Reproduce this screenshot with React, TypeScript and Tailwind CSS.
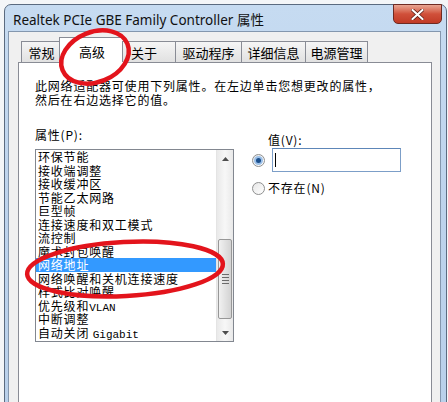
import React from 'react';

const cjk = "font-['Noto_Sans_CJK_SC','Noto_Sans',sans-serif]";

const items = [
  '环保节能',
  '接收端调整',
  '接收缓冲区',
  '节能乙太网路',
  '巨型帧',
  '连接速度和双工模式',
  '流控制',
  '魔术封包唤醒',
  '网络地址',
  '网络唤醒和关机连接速度',
  '样式比对唤醒',
  '优先级和VLAN',
  '中断调整',
  '自动关闭 Gigabit',
];

// latin runs in the list use the half-width mono look of the original font
const ItemText = ({ text }: { text: string }) => (
  <>
    {text.split(/([A-Za-z]+)/).map((part, i) =>
      /^[A-Za-z]+$/.test(part) ? (
        <span key={i} className="font-['Liberation_Mono',monospace] text-[11px] tracking-[0px]">
          {part}
        </span>
      ) : (
        <span key={i}>{part}</span>
      )
    )}
  </>
);

const Tab = ({ label, className = '' }: { label: string; className?: string }) => (
  <div
    className={`h-[21px] flex items-center border border-b-0 border-[#898c95] bg-gradient-to-b from-[#f5f5f5] to-[#e1e1e1] text-[13px] leading-[14px] text-black ${className}`}
  >
    {label}
  </div>
);

const Radio = ({ checked }: { checked?: boolean }) => (
  <div className="w-[13px] h-[13px] rounded-full border border-[#8e8f8f] bg-gradient-to-br from-[#e6e6e6] to-[#ffffff] flex items-center justify-center shrink-0">
    {checked && <div className="w-[5px] h-[5px] rounded-full bg-[#1b4f8c] ring-2 ring-[#9cc0e8]" />}
  </div>
);

const ScrollArrow = ({ up }: { up?: boolean }) => (
  <div className="h-[17px] flex items-center justify-center">
    <svg width="7" height="4" viewBox="0 0 7 4">
      <path d={up ? 'M0 4 L3.5 0 L7 4 Z' : 'M0 0 L3.5 4 L7 0 Z'} fill="#4d4d4d" />
    </svg>
  </div>
);

export default function App() {
  return (
    <div className="w-[448px] h-[402px] overflow-hidden relative bg-[#f4f6f8]">
      {/* window frame */}
      <div className="ml-[4px] mt-[4px] w-[443px] h-[420px] rounded-t-[7px] border border-[#5b6b80] bg-gradient-to-b from-[#c6dbf1] via-[#bdd3ec] to-[#b9d0ea] flex flex-col">
        {/* title bar */}
        <div className="h-[31px] flex items-start justify-between pl-[8px] pr-[4px]">
          <div className="pt-[7px] text-[13.5px] leading-[16px] text-[#111] font-['Segoe_UI','Noto_Sans','Noto_Sans_CJK_SC',sans-serif]">
            Realtek PCIe GBE Family Controller 属性
          </div>
          <div className="-mt-px w-[49px] h-[20px] rounded-b-[5px] border border-[#6e2a22] bg-gradient-to-b from-[#e8a592] via-[#d0503a] to-[#c13a26] flex items-center justify-center">
            <svg width="13" height="11" viewBox="0 0 13 11">
              <path d="M1.5 1 L11.5 10 M11.5 1 L1.5 10" stroke="#5a1a12" strokeWidth="3.6" strokeLinecap="round" />
              <path d="M1.5 1 L11.5 10 M11.5 1 L1.5 10" stroke="#ffffff" strokeWidth="2.2" strokeLinecap="round" />
            </svg>
          </div>
        </div>

        {/* client area */}
        <div className="ml-[3px] w-[433px] flex-1 border border-[#8497ae] bg-[#f0f0f0]">
          <div className="ml-[9px] mt-[4px] w-[414px]">
            {/* tabs */}
            <div className={`flex items-end h-[26px] pl-[3px] relative z-10 ${cjk}`}>
              <Tab label="常规" className="w-[41px] justify-center pt-[2px]" />
              <div className="-ml-[3px] -mb-px w-[66px] h-[26px] border border-b-0 border-[#898c95] bg-white flex items-center justify-center text-[13px] leading-[14px] text-black pt-[2px]">
                高级
              </div>
              <Tab label="关于" className="-ml-[3px] w-[54px] pl-[8px] pt-[2px]" />
              <Tab label="驱动程序" className="-ml-px w-[67px] justify-center pt-[2px]" />
              <Tab label="详细信息" className="-ml-px w-[65px] justify-center pt-[2px]" />
              <Tab label="电源管理" className="-ml-px w-[63px] justify-center pt-[2px]" />
            </div>

            {/* tab page */}
            <div className={`h-[360px] border border-[#898c95] bg-white pl-[16px] pt-[16px] text-[12px] tracking-[0.8px] leading-[14px] text-black ${cjk}`}>
              <p>此网络适配器可使用下列属性。在左边单击您想更改的属性，</p>
              <p>然后在右边选择它的值。</p>

              <div className="flex mt-[21px]">
                {/* property list */}
                <div className="w-[199px]">
                  <div>属性(P):</div>
                  <div className="mt-[7px] h-[193px] border border-[#828790] flex">
                    <div className="flex-1 overflow-hidden">
                      {items.map((it) => (
                        <div
                          key={it}
                          className={`h-[13.5px] leading-[13.5px] pl-[2px] whitespace-nowrap ${it === '网络地址' ? 'bg-[#3399ff] text-white' : ''}`}
                        >
                          <ItemText text={it} />
                        </div>
                      ))}
                    </div>
                    <div className="w-[17px] bg-gradient-to-r from-[#e9e9e9] via-[#f7f7f7] to-[#e9e9e9] border-l border-[#e4e4e4] flex flex-col">
                      <ScrollArrow up />
                      <div className="flex-1 px-px">
                        <div className="mt-[72px] h-[80px] rounded-[2px] border border-[#979797] bg-gradient-to-r from-[#f1f1f1] to-[#d3d3d3] flex flex-col items-center justify-center gap-[2px]">
                          <div className="w-[7px] h-px bg-[#6b6b6b]" />
                          <div className="w-[7px] h-px bg-[#6b6b6b]" />
                          <div className="w-[7px] h-px bg-[#6b6b6b]" />
                          <div className="w-[7px] h-px bg-[#6b6b6b]" />
                        </div>
                      </div>
                      <ScrollArrow />
                    </div>
                  </div>
                </div>

                {/* value */}
                <div className="ml-[18px] pt-[5px]">
                  <div className="pl-[16px]">值(V):</div>
                  <div className="mt-[1px] flex items-center gap-[7px]">
                    <Radio checked />
                    <div className="w-[129px] h-[24px] border border-[#7c9ec8] border-t-[#5d86b8] bg-white flex items-center pl-[2px]">
                      <div className="w-px h-[14px] bg-black" />
                    </div>
                  </div>
                  <div className="mt-[9px] flex items-center gap-[3px]">
                    <Radio />
                    <span>不存在(N)</span>
                  </div>
                </div>
              </div>
            </div>
          </div>
        </div>
      </div>

      {/* red annotation marks */}
      <svg className="absolute inset-0 z-20 pointer-events-none" width="448" height="402" viewBox="0 0 448 402">
        <ellipse cx="95" cy="57" rx="35" ry="25" transform="rotate(-22 95 57)" fill="none" stroke="#e3141c" strokeWidth="4.5" />
        <ellipse cx="125" cy="269" rx="98" ry="27" transform="rotate(-3 125 269)" fill="none" stroke="#e3141c" strokeWidth="4.5" />
      </svg>
    </div>
  );
}
